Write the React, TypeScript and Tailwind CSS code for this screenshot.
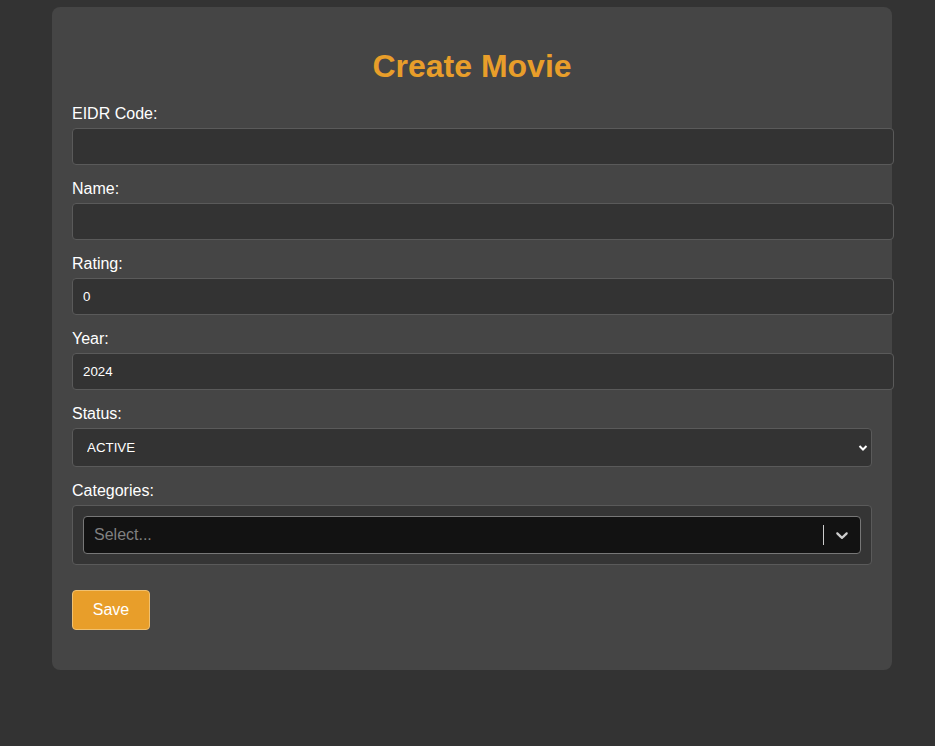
import { useState } from 'react';

const inputClass =
  'box-content block w-full h-[15px] px-[10px] py-[10px] bg-[#333333] border border-[#5a5a5a] rounded-[4px] text-white text-[13.33px] outline-none';

export default function App() {
  const [form, setForm] = useState({
    eidr: '',
    name: '',
    rating: '0',
    year: '2024',
    status: 'ACTIVE',
  });

  const update = (field: string, value: string) =>
    setForm(prev => ({ ...prev, [field]: value }));

  return (
    <div
      className="min-h-screen bg-[#333333] pt-[7px] pl-[52px]"
      style={{ fontFamily: '"Liberation Sans", Arial, sans-serif' }}
    >
      <div className="w-[840px] bg-[#454545] rounded-[8px] p-[20px]">
        <h2 className="mt-[21px] mb-[20px] text-center text-[32px] leading-[37px] font-bold text-[#e89e2a]">
          Create Movie
        </h2>

        {/* EIDR Code */}
        <label className="block text-white text-[16px] leading-[18px] mb-[5px]">EIDR Code:</label>
        <input
          type="text"
          value={form.eidr}
          onChange={e => update('eidr', e.target.value)}
          className={inputClass}
        />

        {/* Name */}
        <label className="block text-white text-[16px] leading-[18px] mt-[15px] mb-[5px]">Name:</label>
        <input
          type="text"
          value={form.name}
          onChange={e => update('name', e.target.value)}
          className={inputClass}
        />

        {/* Rating */}
        <label className="block text-white text-[16px] leading-[18px] mt-[15px] mb-[5px]">Rating:</label>
        <input
          type="text"
          value={form.rating}
          onChange={e => update('rating', e.target.value)}
          className={inputClass}
        />

        {/* Year */}
        <label className="block text-white text-[16px] leading-[18px] mt-[15px] mb-[5px]">Year:</label>
        <input
          type="text"
          value={form.year}
          onChange={e => update('year', e.target.value)}
          className={inputClass}
        />

        {/* Status */}
        <label className="block text-white text-[16px] leading-[18px] mt-[15px] mb-[5px]">Status:</label>
        <div className="relative">
          <select
            value={form.status}
            onChange={e => update('status', e.target.value)}
            className="appearance-none block w-full h-[39px] pl-[14px] pr-[30px] bg-[#333333] border border-[#5a5a5a] rounded-[4px] text-white text-[13.33px] outline-none"
          >
            <option value="ACTIVE">ACTIVE</option>
            <option value="INACTIVE">INACTIVE</option>
          </select>
          <svg
            className="absolute right-[4px] top-[15px] pointer-events-none"
            width="10"
            height="10"
            viewBox="0 0 10 10"
          >
            <path d="M1.5 3 L5 6.5 L8.5 3" fill="none" stroke="white" strokeWidth="2" />
          </svg>
        </div>

        {/* Categories */}
        <label className="block text-white text-[16px] leading-[18px] mt-[15px] mb-[5px]">Categories:</label>
        <div className="bg-[#353535] border border-[#5a5a5a] rounded-[4px] p-[10px]">
          <div className="flex items-center h-[38px] bg-[#121212] border border-[#777777] rounded-[4px]">
            <div className="flex-1 pl-[10px] text-[16px] text-[#808080]">Select...</div>
            <div className="flex items-center h-full">
              <span className="w-px h-[20px] bg-[#cccccc]" />
              <div className="px-[8px] flex items-center">
                <svg width="20" height="20" viewBox="0 0 20 20">
                  <path
                    d="M4.516 7.548c0.436-0.446 1.043-0.481 1.576 0l3.908 3.747 3.908-3.747c0.533-0.481 1.141-0.446 1.574 0 0.436 0.445 0.408 1.197 0 1.615-0.406 0.418-4.695 4.502-4.695 4.502-0.217 0.223-0.502 0.335-0.787 0.335s-0.57-0.112-0.789-0.335c0 0-4.287-4.084-4.695-4.502s-0.436-1.17 0-1.615z"
                    fill="#cccccc"
                  />
                </svg>
              </div>
            </div>
          </div>
        </div>

        <button
          type="button"
          className="mt-[25px] mb-[20px] w-[78px] h-[40px] bg-[#e89e2a] border border-[#f0c070] rounded-[4px] text-white text-[16px]"
        >
          Save
        </button>
      </div>
    </div>
  );
}
